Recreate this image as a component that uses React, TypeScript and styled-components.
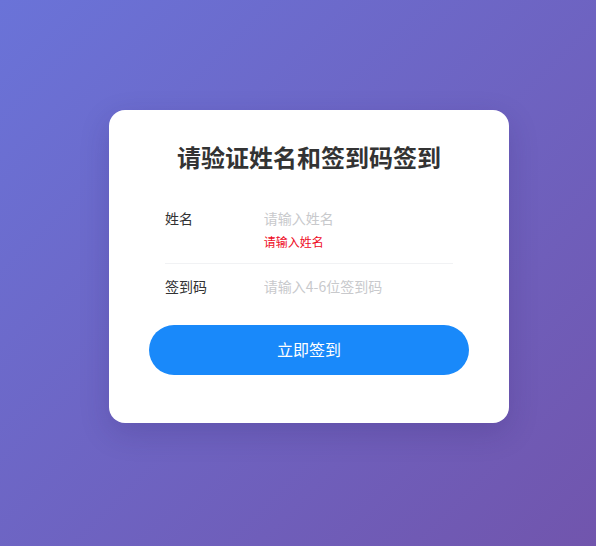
import React from "react";
import styled, { createGlobalStyle } from "styled-components";

const GlobalStyle = createGlobalStyle`
  html, body { margin: 0; padding: 0; }
  body {
    font-family: "Noto Sans CJK SC", "Noto Sans", sans-serif;
    -webkit-font-smoothing: antialiased;
  }
  * { box-sizing: border-box; }
`;

const Page = styled.div`
  height: 100vh;
  min-height: 546px;
  padding: 0 0 13px 22px;
  display: flex;
  align-items: center;
  justify-content: center;
  background: linear-gradient(135deg, #6a73d8 0%, #7155ad 100%);
`;

const Card = styled.div`
  width: 400px;
  background: #fff;
  border-radius: 16px;
  padding: 31px 40px 48px;
  box-shadow: 0 10px 30px rgba(40, 20, 90, 0.18);
`;

const Title = styled.h2`
  margin: 0 0 24px;
  font-size: 24px;
  line-height: 32px;
  font-weight: 700;
  color: #333;
  text-align: center;
`;

const Cell = styled.div<{ $bordered?: boolean; $padBottom?: number }>`
  position: relative;
  display: flex;
  padding: 9px 16px ${(p) => p.$padBottom ?? 11}px;
  font-size: 14px;
  line-height: 24px;
  background: #fff;
  &::after {
    content: "";
    display: ${(p) => (p.$bordered ? "block" : "none")};
    position: absolute;
    left: 16px;
    right: 16px;
    bottom: 0;
    height: 1px;
    background: #f1f2f4;
  }
  ${(p) => (p.$bordered ? "border-bottom: 1px solid transparent;" : "")}
`;

const Label = styled.label`
  width: 6.2em;
  flex: none;
  margin-right: 12px;
  color: #323233;
`;

const Body = styled.div`
  flex: 1;
  min-width: 0;
  display: flex;
  flex-direction: column;
`;

const Input = styled.input`
  display: block;
  width: 100%;
  margin: 0;
  padding: 0;
  border: 0;
  outline: none;
  background: transparent;
  font: inherit;
  font-size: 14px;
  line-height: 24px;
  height: 24px;
  color: #323233;
  &::placeholder {
    color: #c8c9cc;
  }
`;

const ErrorMsg = styled.div`
  margin-top: 3px;
  font-size: 12px;
  line-height: 18px;
  color: #ee0a24;
`;

const SubmitButton = styled.button`
  display: block;
  width: 100%;
  height: 50px;
  margin-top: 16px;
  border: 0;
  border-radius: 25px;
  background: #1989fa;
  color: #fff;
  font-family: inherit;
  font-size: 16px;
  line-height: 48px;
  padding: 0 0 2px;
  cursor: pointer;
`;

export default function App() {
  return (
    <>
      <GlobalStyle />
      <Page>
        <Card>
          <Title>请验证姓名和签到码签到</Title>
          <Cell $bordered $padBottom={13}>
            <Label>姓名</Label>
            <Body>
              <Input placeholder="请输入姓名" />
              <ErrorMsg>请输入姓名</ErrorMsg>
            </Body>
          </Cell>
          <Cell>
            <Label>签到码</Label>
            <Body>
              <Input placeholder="请输入4-6位签到码" />
            </Body>
          </Cell>
          <SubmitButton>立即签到</SubmitButton>
        </Card>
      </Page>
    </>
  );
}
